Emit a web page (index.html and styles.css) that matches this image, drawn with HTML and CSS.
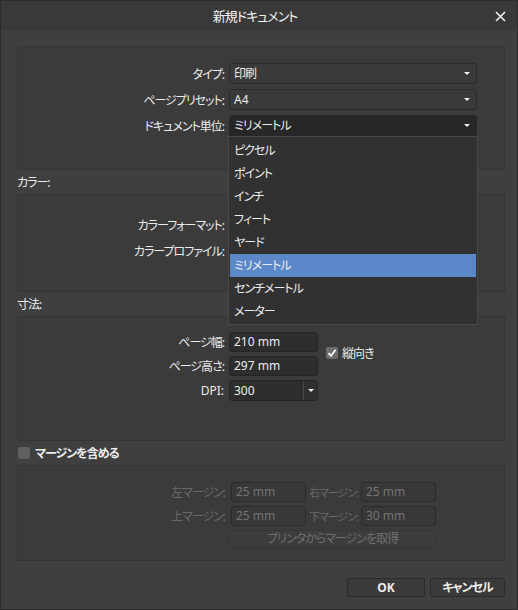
FILE: index.html
```html
<!DOCTYPE html>
<html lang="ja">
<head>
  <meta charset="UTF-8" />
  <title>新規ドキュメント</title>
  <link rel="stylesheet" href="styles.css">
</head>
<body>
  <div class="window">
    <div class="titlebar">
      <span class="title">新規ドキュメント</span>
      <svg class="close" width="11" height="11" viewBox="0 0 11 11">
        <path d="M1 1 L10 10 M10 1 L1 10" stroke="#f0f0f0" stroke-width="1.6" />
      </svg>
    </div>

    <div class="content">
      <div class="panel p-doc">
        <div class="row">
          <label>タイプ:</label>
          <div class="select">印刷<i class="arrow"></i></div>
        </div>
        <div class="row">
          <label>ページプリセット:</label>
          <div class="select lat">A4<i class="arrow"></i></div>
        </div>
        <div class="row">
          <label>ドキュメント単位:</label>
          <div class="select open">ミリメートル<i class="arrow"></i>
            <ul class="menu">
              <li>ピクセル</li>
              <li>ポイント</li>
              <li>インチ</li>
              <li>フィート</li>
              <li>ヤード</li>
              <li class="sel">ミリメートル</li>
              <li>センチメートル</li>
              <li>メーター</li>
            </ul>
          </div>
        </div>
      </div>

      <div class="heading">カラー:</div>
      <div class="panel p-color">
        <div class="row">
          <label>カラーフォーマット:</label>
          <div class="select"><i class="arrow"></i></div>
        </div>
        <div class="row">
          <label>カラープロファイル:</label>
          <div class="select"><i class="arrow"></i></div>
        </div>
      </div>

      <div class="heading">寸法:</div>
      <div class="panel p-size">
        <div class="size-grid">
          <div class="size-rows">
            <div class="row r20">
              <label>ページ幅:</label>
              <div class="input lat w88">210 mm</div>
            </div>
            <div class="row r20">
              <label>ページ高さ:</label>
              <div class="input lat w88">297 mm</div>
            </div>
            <div class="row r21">
              <label class="lat">DPI:</label>
              <div class="combo lat">
                <span class="combo-val">300</span>
                <span class="combo-btn"><i class="arrow"></i></span>
              </div>
            </div>
          </div>
          <div class="check-wrap">
            <span class="check on">
              <svg width="10" height="10" viewBox="0 0 10 10">
                <path d="M1.5 5.2 L4 7.8 L8.6 1.8" fill="none" stroke="#fff" stroke-width="1.8" />
              </svg>
            </span>
            <span>縦向き</span>
          </div>
        </div>
      </div>

      <div class="heading check-heading">
        <span class="check"></span>
        <span class="bold">マージンを含める</span>
      </div>
      <div class="panel p-margin">
        <div class="row r20">
          <label class="dim">左マージン:</label>
          <div class="input lat dis">25 mm</div>
          <label class="dim small">右マージン:</label>
          <div class="input lat dis">25 mm</div>
        </div>
        <div class="row r20">
          <label class="dim">上マージン:</label>
          <div class="input lat dis">25 mm</div>
          <label class="dim small">下マージン:</label>
          <div class="input lat dis">30 mm</div>
        </div>
        <div class="printer-btn">プリンタからマージンを取得</div>
      </div>

      <div class="footer">
        <div class="btn lat">OK</div>
        <div class="btn">キャンセル</div>
      </div>
    </div>
  </div>
</body>
</html>
```

FILE: styles.css
```css
* {
  box-sizing: border-box;
}

body {
  margin: 0;
  background: #2b2b2b;
  font-family: 'Noto Sans', 'Noto Sans CJK JP', sans-serif;
  font-size: 12px;
  font-feature-settings: "palt";
  letter-spacing: -1px;
  color: #ececec;
}

.lat {
  letter-spacing: 0;
}

.window {
  width: 518px;
  height: 610px;
  background: #3f3f3f;
  border: 1px solid #2c2c2c;
  display: flex;
  flex-direction: column;
}

.titlebar {
  height: 29px;
  background: #393939;
  position: relative;
  display: flex;
  align-items: center;
  justify-content: center;
}

.title {
  font-size: 13px;
  color: #f2f2f2;
  margin-left: -8px;
}

.close {
  position: absolute;
  right: 11px;
  top: 10px;
}

.content {
  padding: 16px 12px 0 16px;
  flex: 1;
}

.panel {
  background: #3b3b3b;
  border: 1px solid #343434;
}

.p-doc {
  height: 124px;
  padding-top: 16px;
}

.p-color {
  height: 98px;
  padding-top: 19px;
}

.p-size {
  height: 125px;
  padding-top: 15px;
}

.p-margin {
  height: 96px;
  padding-top: 16px;
}

.heading {
  height: 24px;
  display: flex;
  align-items: center;
}

.row {
  display: flex;
  align-items: center;
  height: 21px;
  margin-bottom: 5px;
}

.row.r20 {
  height: 20px;
  margin-bottom: 4px;
}

.row.r21 {
  height: 21px;
}

.row label {
  width: 206px;
  text-align: right;
  margin-right: 5px;
  white-space: nowrap;
}

.select {
  position: relative;
  width: 248px;
  height: 21px;
  line-height: 19px;
  padding-left: 4px;
  background: #3a3a3a;
  border: 1px solid #2a2a2a;
  border-radius: 3px;
}

.select.open {
  background: #272727;
  border-color: #272727;
  border-radius: 3px 3px 0 0;
}

.arrow {
  position: absolute;
  right: 6px;
  top: 8px;
  width: 0;
  height: 0;
  border-left: 3px solid transparent;
  border-right: 3px solid transparent;
  border-top: 3px solid #f0f0f0;
}

.menu {
  position: absolute;
  left: -2px;
  top: 20px;
  width: 250px;
  margin: 0;
  padding: 2px 1px 1px;
  list-style: none;
  background: #313131;
  border: 1px solid #4a4a4a;
  z-index: 5;
}

.menu li {
  height: 23px;
  line-height: 23px;
  padding-left: 4px;
}

.menu li.sel {
  background: #5b88c9;
}

.size-grid {
  display: flex;
}

.size-rows {
  display: flex;
  flex-direction: column;
}

.input {
  height: 20px;
  line-height: 18px;
  padding-left: 4px;
  background: #2d2d2d;
  border: 1px solid #252525;
  border-radius: 3px;
}

.w88 {
  width: 89px;
}

.combo {
  display: flex;
  width: 89px;
  height: 21px;
  background: #2d2d2d;
  border: 1px solid #252525;
  border-radius: 3px;
}

.combo-val {
  flex: 1;
  padding-left: 4px;
  line-height: 19px;
}

.combo-btn {
  position: relative;
  width: 14px;
  border-left: 1px solid #474747;
  background: #303030;
}

.combo-btn .arrow {
  right: 3px;
  top: 8px;
}

.check-wrap {
  display: flex;
  align-items: center;
  gap: 4px;
  margin-left: 8px;
  margin-top: 14px;
  height: 14px;
}

.check {
  display: inline-flex;
  align-items: center;
  justify-content: center;
  width: 12px;
  height: 12px;
  border-radius: 2px;
  background: #5f5f5f;
}

.check.on {
  background: #6c6c6c;
}

.check-heading {
  gap: 5px;
  padding-left: 1px;
}

.bold {
  font-weight: bold;
}

.dim {
  color: #6a6a6a;
}

.row label.dim {
  width: 207px;
  margin-right: 6px;
}

.row label.dim.small {
  width: 52px;
  margin-right: 3px;
  font-size: 11px;
}

.input.dis {
  width: 75px;
  color: #747474;
  background: #383838;
  border-color: #2a2a2a;
}

.printer-btn {
  margin-left: 211px;
  margin-top: 1px;
  width: 207px;
  height: 18px;
  line-height: 16px;
  text-align: center;
  color: #6e6e6e;
  background: #3d3d3d;
  border: 1px solid #363636;
  border-radius: 2px;
}

.footer {
  display: flex;
  justify-content: flex-end;
  gap: 5px;
  margin-top: 17px;
}

.btn {
  width: 78px;
  height: 19px;
  line-height: 17px;
  text-align: center;
  font-weight: bold;
  background: #3a3a3a;
  border: 1px solid #2b2b2b;
  border-radius: 2px;
}

.btn + .btn {
  width: 75px;
}
```
